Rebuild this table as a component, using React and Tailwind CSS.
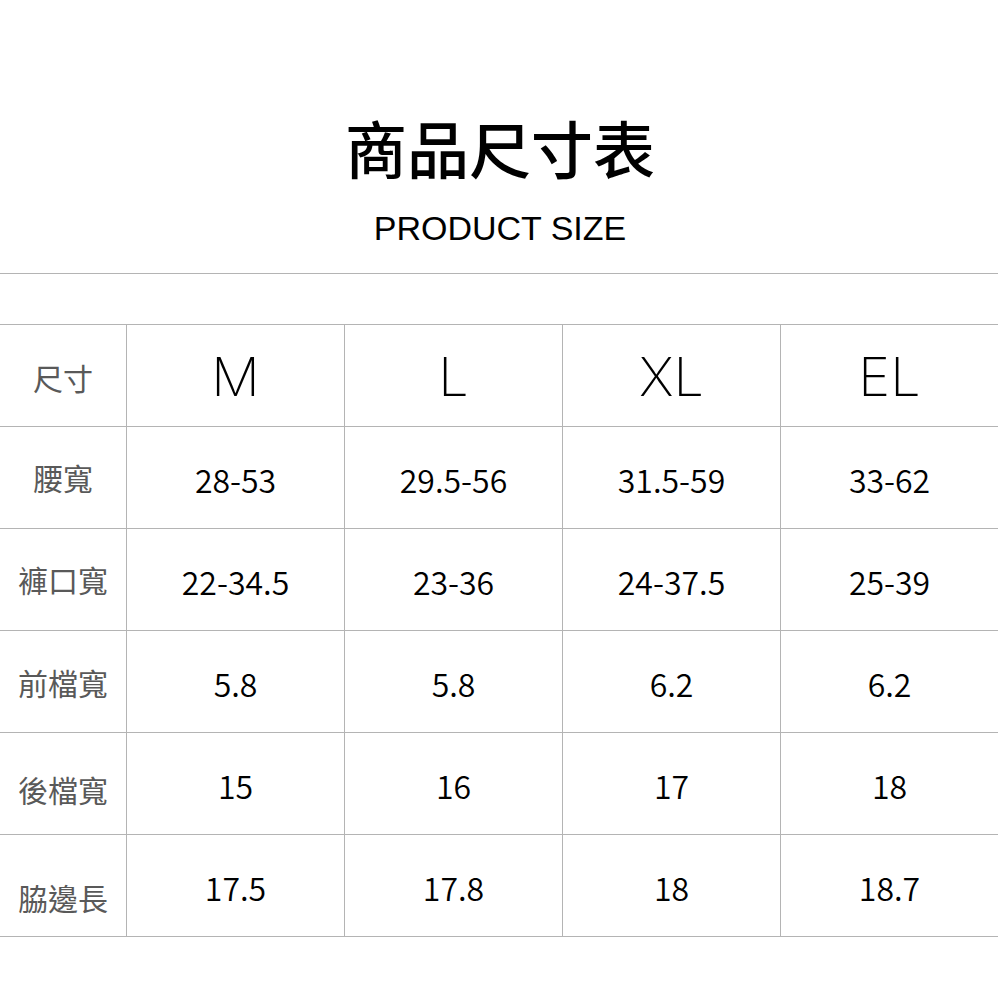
export default function App() {
    const rows = [
        { label: "腰寬", values: ["28-53", "29.5-56", "31.5-59", "33-62"], pad: "pt-0" },
        { label: "褲口寬", values: ["22-34.5", "23-36", "24-37.5", "25-39"], pad: "pt-0" },
        { label: "前檔寬", values: ["5.8", "5.8", "6.2", "6.2"], pad: "pt-[2px]" },
        { label: "後檔寬", values: ["15", "16", "17", "18"], pad: "pt-[12px]" },
        { label: "脇邊長", values: ["17.5", "17.8", "18", "18.7"], pad: "pt-[24px]" },
    ];
    const sizes = ["M", "L", "XL", "EL"];

    return (
        <div className="w-[1000px] h-[1000px] bg-white">
            {/* Title */}
            <div className="flex flex-col items-center pt-[114px]">
                <h1 className="text-[62px] leading-[66px] font-medium text-black font-['Noto_Sans_CJK_TC',sans-serif]">
                    商品尺寸表
                </h1>
                <p className="mt-[28px] text-[34px] leading-[40px] text-black font-['Liberation_Sans',Arial,sans-serif]">
                    PRODUCT SIZE
                </p>
            </div>
            <div className="mt-[25px] w-[998px] border-t border-[#b4b4b4]" />

            {/* Table */}
            <div className="mt-[50px] w-[998px] border-b border-[#b4b4b4] font-['Noto_Sans_CJK_TC',sans-serif]">
                <div className="grid grid-cols-[126px_218px_218px_218px_218px] h-[102px] border-t border-[#b4b4b4]">
                    <div className="flex items-center justify-center text-[30px] text-[#595959] pt-[4px]">尺寸</div>
                    {sizes.map((s) => (
                        <div
                            key={s}
                            className="flex items-center justify-center border-l border-[#b4b4b4] text-[54px] font-extralight text-black font-['Inter',sans-serif] pt-[2px]"
                        >
                            {s}
                        </div>
                    ))}
                </div>
                {rows.map((row) => (
                    <div
                        key={row.label}
                        className="grid grid-cols-[126px_218px_218px_218px_218px] h-[102px] border-t border-[#b4b4b4]"
                    >
                        <div className={`flex items-center justify-center text-[30px] text-[#595959] ${row.pad}`}>
                            {row.label}
                        </div>
                        {row.values.map((v, i) => (
                            <div
                                key={i}
                                className="flex items-center justify-center border-l border-[#b4b4b4] text-[32px] font-[350] text-black pt-[2px]"
                            >
                                {v}
                            </div>
                        ))}
                    </div>
                ))}
            </div>
        </div>
    );
}
